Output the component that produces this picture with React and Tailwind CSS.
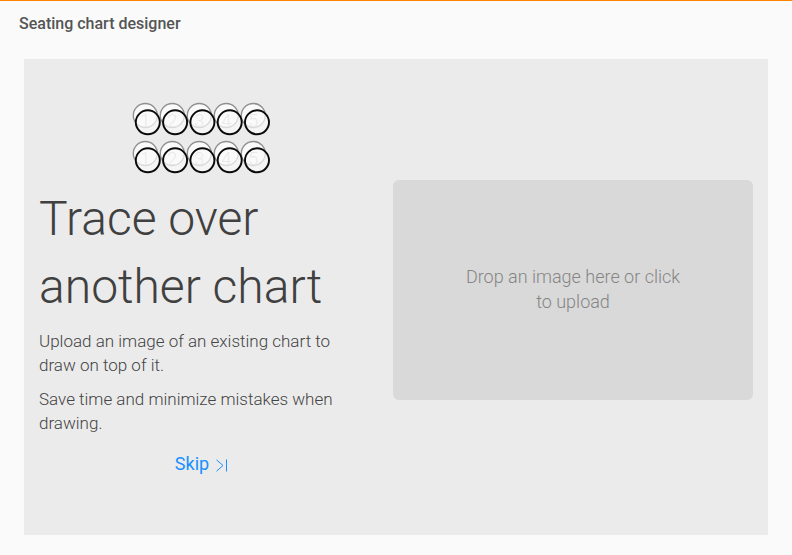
const xs = [0, 1, 2, 3, 4];

function Seats() {
  return (
    <svg width="160" height="85" viewBox="0 0 160 85" className="block" style={{ fontFamily: "Roboto, sans-serif" }}>
      {[0, 38].map((dy) => (
        <g key={dy}>
          {xs.map((i) => (
            <g key={i}>
              <circle cx={25.3 + i * 27} cy={20.5 + dy} r="12" fill="#fafafa" stroke="#8f8f8f" strokeWidth="1.3" />
              <text x={25.3 + i * 27} y={31.5 + dy} textAnchor="middle" fontSize="18" fontWeight="300" fill="#c4c4c4">{i + 1}</text>
            </g>
          ))}
          {xs.map((i) => (
            <circle key={i} cx={27.8 + i * 27.3} cy={27.3 + dy} r="12" fill="#fafafa" fillOpacity="0.7" stroke="#0a0a0a" strokeWidth="1.9" />
          ))}
        </g>
      ))}
    </svg>
  );
}

export default function App() {
  return (
    <div className="w-[792px] h-[555px] overflow-hidden bg-[#fafafa] border-t-[1px] border-[#ff8400] font-['Roboto',sans-serif]">
      <div className="h-[58px] pl-[19px] pt-[14px] text-[16px] leading-[18px] font-medium text-[#555]">Seating chart designer</div>
      <div className="mx-[24px] h-[476px] bg-[#ebebeb] flex items-center pl-[15px] pr-[15px] pb-[14px] gap-[14px]">
        <div className="w-[340px] shrink-0 h-[476px] -mb-[14px] flex flex-col pt-[36px]">
          <div className="ml-[81px]"><Seats /></div>
          <h1 className="mt-[5px] text-[48px] leading-[68px] font-light text-[#404040]">Trace over another chart</h1>
          <p className="mt-[8px] w-[320px] text-[17px] leading-[24px] font-light text-[#444]">Upload an image of an existing chart to draw on top of it.</p>
          <p className="mt-[10px] w-[320px] text-[17px] leading-[24px] font-light text-[#444]">Save time and minimize mistakes when drawing.</p>
          <div className="mt-[17px] flex justify-center items-center gap-[6px] pr-[15px] text-[18px] leading-[24px] text-[#1890ff] font-normal">
            <span>Skip</span>
            <svg width="13" height="13" viewBox="0 0 13 13" fill="none" stroke="#1890ff" strokeWidth="1" className="mt-[2px]">
              <path d="M1.5 0.8 L8 6.5 L1.5 12.2" />
              <path d="M11.5 0.5 V12.5" />
            </svg>
          </div>
        </div>
        <div className="w-[360px] shrink-0 h-[220px] rounded-[6px] bg-[#d9d9d9] flex items-center justify-center px-[70px] pb-[2px] text-center text-[18px] leading-[25px] font-light text-[#858585]">
          Drop an image here or click to upload
        </div>
      </div>
    </div>
  );
}
